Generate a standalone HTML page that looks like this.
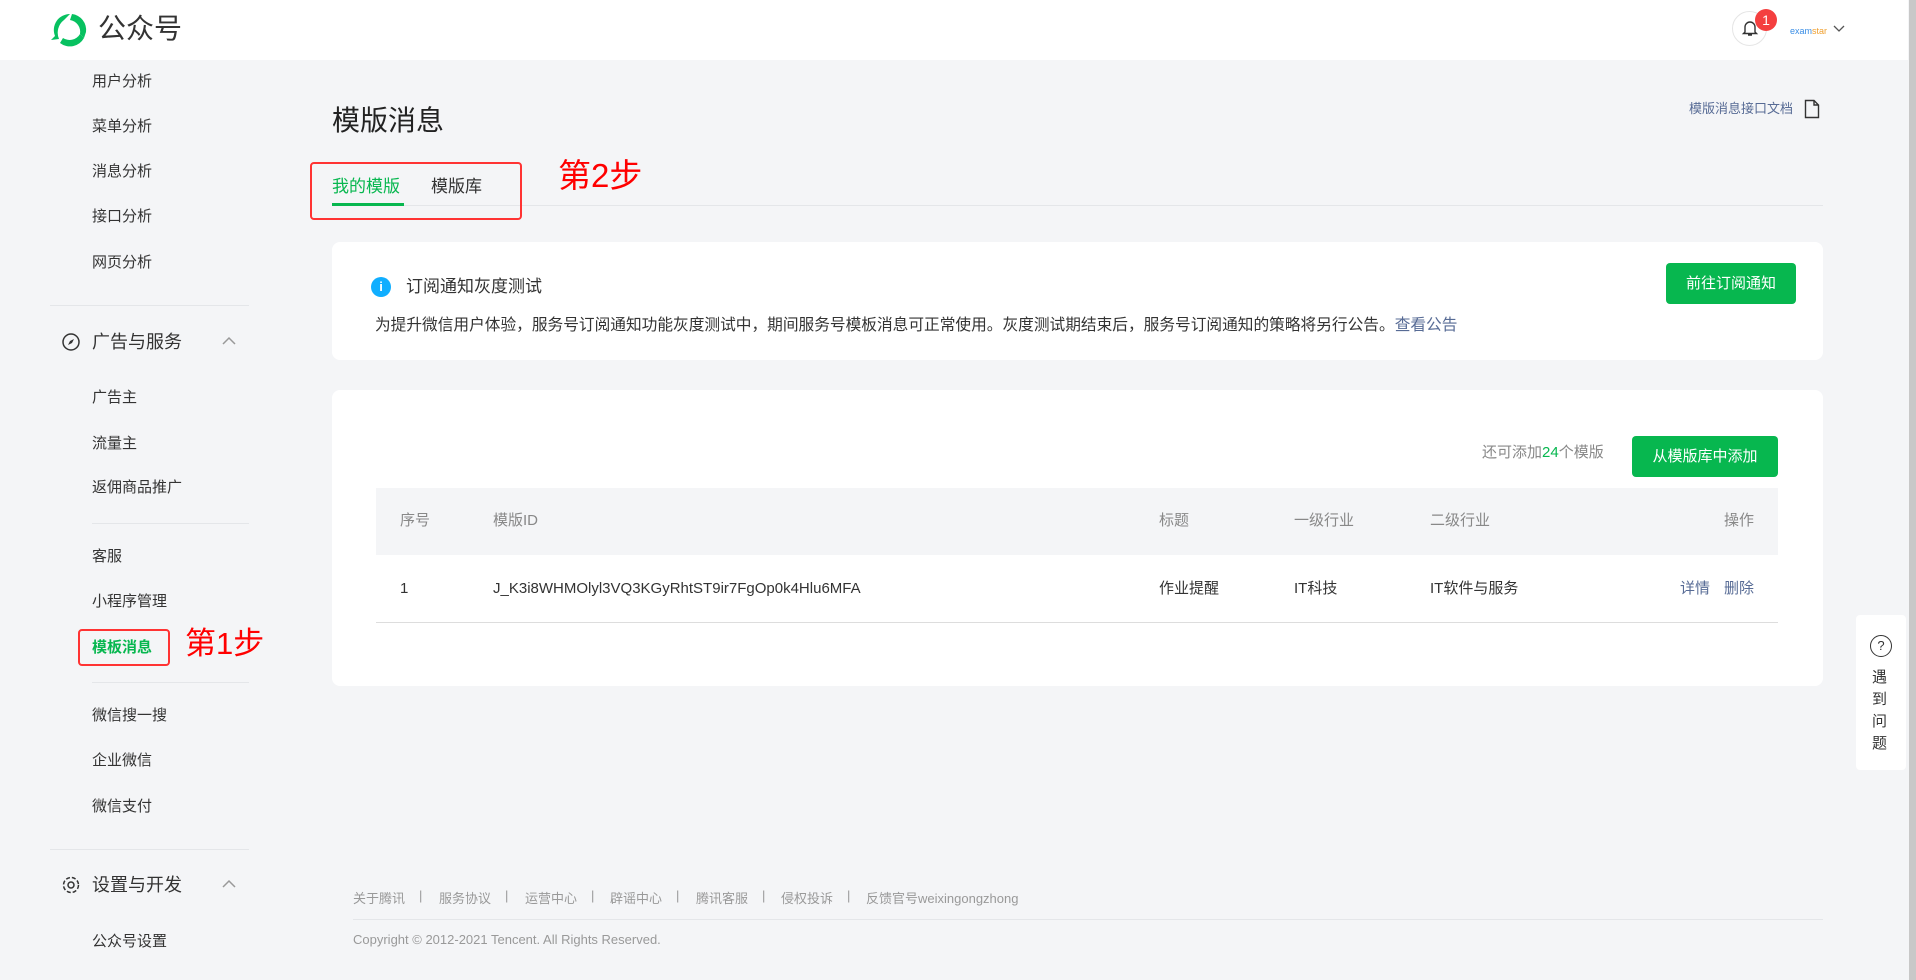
<!DOCTYPE html><html><head><meta charset="utf-8"><style>
*{margin:0;padding:0;box-sizing:border-box}
body{width:1916px;height:980px;overflow:hidden;background:#f4f5f7;font-family:"Liberation Sans","Noto Sans CJK SC",sans-serif;color:#333;position:relative}
.a{position:absolute;white-space:nowrap}
.hdr{position:absolute;left:0;top:0;width:1908px;height:60px;background:#fff}
.si{position:absolute;left:92px;font-size:15px;color:#333;line-height:20px}
.sep{position:absolute;left:50px;width:199px;height:1px;background:#e4e6e9}
.card{position:absolute;left:332px;width:1491px;background:#fff;border-radius:8px}
.th{position:absolute;top:511px;font-size:15px;color:#888;line-height:20px}
.td{position:absolute;top:579px;font-size:15px;color:#333;line-height:20px}
.btn{position:absolute;background:#07b74f;color:#fff;font-size:15px;border-radius:4px;text-align:center}
.ft{font-size:13px;color:#999}
.fl{position:absolute;top:888px;font-size:13px;color:#999;white-space:nowrap}
</style></head><body>
<div class="hdr"></div>
<svg class="a" style="left:50px;top:12px" width="40" height="36" viewBox="0 0 40 36"><path d="M20 2 A16 16 0 0 0 5 24 L1 28 L9 27 A16 16 0 0 1 14 8 Z" fill="#07c160"/><path d="M22 2 A16 16 0 0 1 36 20 L34 26 L30 22 A12 12 0 0 0 20 8 Z" fill="#07c160"/><path d="M34 26 A16 16 0 0 1 10 31 L13 26 A12 12 0 0 0 30 22 Z" fill="#07c160"/></svg>
<div class="a" style="left:98px;top:11px;font-size:28px;color:#333;line-height:36px">公众号</div>
<div class="a" style="left:1732px;top:11px;width:35px;height:35px;border:1px solid #e5e5e5;border-radius:50%"></div>
<svg class="a" style="left:1740px;top:18px" width="20" height="20" viewBox="0 0 20 20"><path d="M5 14 V9 a5 5 0 0 1 10 0 V14 L16.5 15.5 H3.5 Z M8 17 h4" fill="none" stroke="#333" stroke-width="1.4"/></svg>
<div class="a" style="left:1755px;top:9px;width:22px;height:22px;border-radius:50%;background:#f43f3f;color:#fff;font-size:14px;text-align:center;line-height:22px">1</div>
<div class="a" style="left:1790px;top:16px;width:36px;height:22px;font-size:9px;color:#3a8ee6;line-height:30px">exam<span style="color:#f0a030">star</span></div>
<svg class="a" style="left:1832px;top:24px" width="14" height="10"><path d="M2 2 L7 7 L12 2" fill="none" stroke="#555" stroke-width="1.3"/></svg>
<div class="a" style="left:1909px;top:0;width:7px;height:980px;background:#c8c8c8"></div>
<div class="si" style="top:72px">用户分析</div>
<div class="si" style="top:117px">菜单分析</div>
<div class="si" style="top:162px">消息分析</div>
<div class="si" style="top:207px">接口分析</div>
<div class="si" style="top:253px">网页分析</div>
<div class="sep" style="top:305px"></div>
<svg class="a" style="left:61px;top:332px" width="20" height="20"><circle cx="10" cy="10" r="8" fill="none" stroke="#333" stroke-width="1.5"/><path d="M13 7 L9 9 L7 13 L11 11 Z" fill="#333"/></svg>
<div class="a" style="left:92px;top:330px;font-size:18px;line-height:24px">广告与服务</div>
<svg class="a" style="left:221px;top:336px" width="16" height="10"><path d="M2 8 L8 2 L14 8" fill="none" stroke="#999" stroke-width="1.5"/></svg>
<div class="si" style="top:388px">广告主</div>
<div class="si" style="top:434px">流量主</div>
<div class="si" style="top:478px">返佣商品推广</div>
<div class="sep" style="top:523px;left:92px;width:157px"></div>
<div class="si" style="top:547px">客服</div>
<div class="si" style="top:592px">小程序管理</div>
<div class="si" style="top:638px;color:#07b74f;font-weight:bold">模板消息</div>
<div class="a" style="left:78px;top:629px;width:92px;height:37px;border:2px solid #f33;border-radius:4px"></div>
<div class="a" style="left:185px;top:626px;font-size:31px;color:#f00;line-height:36px">第1步</div>
<div class="sep" style="top:682px;left:92px;width:157px"></div>
<div class="si" style="top:706px">微信搜一搜</div>
<div class="si" style="top:751px">企业微信</div>
<div class="si" style="top:797px">微信支付</div>
<div class="sep" style="top:849px"></div>
<svg class="a" style="left:61px;top:875px" width="20" height="20"><circle cx="10" cy="10" r="3" fill="none" stroke="#333" stroke-width="1.5"/><circle cx="10" cy="10" r="7.5" fill="none" stroke="#333" stroke-width="1.5" stroke-dasharray="4 2"/></svg>
<div class="a" style="left:92px;top:873px;font-size:18px;line-height:24px">设置与开发</div>
<svg class="a" style="left:221px;top:879px" width="16" height="10"><path d="M2 8 L8 2 L14 8" fill="none" stroke="#999" stroke-width="1.5"/></svg>
<div class="si" style="top:932px">公众号设置</div>

<div class="a" style="left:332px;top:103px;font-size:28px;line-height:36px;color:#222">模版消息</div>
<div class="a" style="left:1689px;top:100px;font-size:13px;color:#576b95;line-height:18px">模版消息接口文档</div>
<svg class="a" style="left:1804px;top:99px" width="16" height="20"><path d="M1.5 1.5 H10 L14.5 6 V18.5 H1.5 Z M10 1.5 V6 H14.5" fill="none" stroke="#333" stroke-width="1.4"/></svg>
<div class="a" style="left:332px;top:205px;width:1491px;height:1px;background:#e4e6e9"></div>
<div class="a" style="left:332px;top:176px;font-size:17px;color:#07b74f;line-height:22px">我的模版</div>
<div class="a" style="left:332px;top:203px;width:72px;height:3px;background:#07b74f"></div>
<div class="a" style="left:431px;top:176px;font-size:17px;color:#333;line-height:22px">模版库</div>
<div class="a" style="left:310px;top:162px;width:212px;height:58px;border:2px solid #f33;border-radius:4px"></div>
<div class="a" style="left:558px;top:156px;font-size:33px;color:#f00;line-height:40px">第2步</div>

<div class="card" style="top:242px;height:118px"></div>
<div class="a" style="left:371px;top:277px;width:20px;height:20px;border-radius:50%;background:#10aeff;color:#fff;font-size:13px;font-weight:bold;text-align:center;line-height:20px">i</div>
<div class="a" style="left:406px;top:276px;font-size:17px;line-height:22px">订阅通知灰度测试</div>
<div class="a" style="left:375px;top:316px;font-size:15.7px;line-height:20px">为提升微信用户体验，服务号订阅通知功能灰度测试中，期间服务号模板消息可正常使用。灰度测试期结束后，服务号订阅通知的策略将另行公告。<span style="color:#576b95">查看公告</span></div>
<div class="btn" style="left:1666px;top:263px;width:130px;height:41px;line-height:41px">前往订阅通知</div>

<div class="card" style="top:390px;height:296px"></div>
<div class="a" style="left:1482px;top:443px;font-size:15px;color:#888;line-height:20px">还可添加<span style="color:#07b74f">24</span>个模版</div>
<div class="btn" style="left:1632px;top:436px;width:146px;height:41px;line-height:41px">从模版库中添加</div>
<div class="a" style="left:376px;top:488px;width:1402px;height:67px;background:#f4f5f7"></div>
<div class="th" style="left:400px">序号</div>
<div class="th" style="left:493px">模版ID</div>
<div class="th" style="left:1159px">标题</div>
<div class="th" style="left:1294px">一级行业</div>
<div class="th" style="left:1430px">二级行业</div>
<div class="th" style="left:1724px">操作</div>
<div class="td" style="left:400px">1</div>
<div class="td" style="left:493px">J_K3i8WHMOlyl3VQ3KGyRhtST9ir7FgOp0k4Hlu6MFA</div>
<div class="td" style="left:1159px">作业提醒</div>
<div class="td" style="left:1294px">IT科技</div>
<div class="td" style="left:1430px">IT软件与服务</div>
<div class="td" style="left:1680px;color:#576b95">详情</div>
<div class="td" style="left:1724px;color:#576b95">删除</div>
<div class="a" style="left:376px;top:622px;width:1402px;height:1px;background:#ddd"></div>

<div class="fl" style="left:353px">关于腾讯</div><div class="fl" style="left:419px">|</div>
<div class="fl" style="left:439px">服务协议</div><div class="fl" style="left:505px">|</div>
<div class="fl" style="left:525px">运营中心</div><div class="fl" style="left:591px">|</div>
<div class="fl" style="left:610px">辟谣中心</div><div class="fl" style="left:676px">|</div>
<div class="fl" style="left:696px">腾讯客服</div><div class="fl" style="left:762px">|</div>
<div class="fl" style="left:781px">侵权投诉</div><div class="fl" style="left:847px">|</div>
<div class="fl" style="left:866px">反馈官号weixingongzhong</div>
<div class="a" style="left:353px;top:919px;width:1470px;height:1px;background:#e4e6e9"></div>
<div class="a ft" style="left:353px;top:932px">Copyright © 2012-2021 Tencent. All Rights Reserved.</div>

<div class="a" style="left:1856px;top:615px;width:50px;height:155px;background:#fff;border-radius:4px"></div>
<div class="a" style="left:1870px;top:635px;width:22px;height:22px;border:1.5px solid #333;border-radius:50%;font-size:13px;text-align:center;line-height:19px">?</div>
<div class="a" style="left:1872px;top:667px;width:18px;font-size:15px;line-height:22px;white-space:normal;color:#333">遇到问题</div>
</body></html>
